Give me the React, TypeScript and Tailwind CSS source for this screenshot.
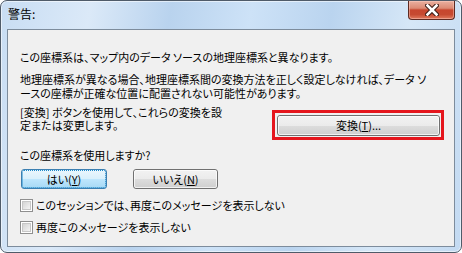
import React from 'react';

const jp = "font-['Noto_Sans_CJK_JP','Noto_Sans_CJK_SC',sans-serif] [font-feature-settings:'palt']";

const Key = ({ k }: { k: string }) => <span className="underline underline-offset-[1px]">{k}</span>;

const WinButton = ({ children, focused, className = '' }: { children: React.ReactNode; focused?: boolean; className?: string }) => (
  <div
    className={`flex items-center justify-center rounded-[3px] border text-[11px] leading-[13px] text-black ${
      focused
        ? 'border-[#3c7fb1] bg-[linear-gradient(#eaf6fd_0%,#d9f0fc_50%,#bee6fd_51%,#a7d9f5_100%)]'
        : 'border-[#707070] bg-[linear-gradient(#f2f2f2_0%,#ebebeb_50%,#dddddd_51%,#cfcfcf_100%)]'
    } ${className}`}
  >
    <div className={`flex h-full w-full items-center justify-center rounded-[2px] border ${focused ? 'border-dotted border-[#1f89c9]' : 'border-white/70'}`}>
      {children}
    </div>
  </div>
);

const CheckBox = ({ label }: { label: string }) => (
  <div className="flex items-center gap-[3px]">
    <div className="h-[13px] w-[13px] border border-[#8f8f8f] bg-white p-[1px]">
      <div className="h-full w-full border border-[#c7c7c7] bg-[linear-gradient(135deg,#d4d4d4,#f4f4f4)]" />
    </div>
    <span className="text-[11px] leading-[13px]">{label}</span>
  </div>
);

export default function App() {
  return (
    <div className={`${jp} h-[253px] w-[462px] bg-white text-black`}>
      <div className="flex h-full w-full flex-col rounded-[7px] border border-[#4f5b69] bg-[linear-gradient(100deg,#c8ddf3_0%,#dbe9f8_18%,#b9d3ee_34%,#cde2f7_50%,#bad4ef_66%,#d6e7f7_82%,#c3daf2_100%)] px-[6px] pb-[5px] shadow-[inset_0_0_0_1px_rgba(255,255,255,0.55)]">
        <div className="flex h-[28px] items-start justify-between">
          <span className="mt-[6px] pl-[1px] text-[12px] leading-[14px]">警告:</span>
          <div className="flex h-[19px] w-[47px] items-center justify-center rounded-b-[4px] border border-t-0 border-[#5d2a22] bg-[linear-gradient(#eab0a0_0%,#dc8a74_40%,#c7462e_50%,#c64a31_75%,#e07a5e_100%)] shadow-[inset_0_0_0_1px_rgba(255,210,200,0.45)]">
            <svg width="14" height="12" viewBox="0 0 14 12">
              <path d="M2.5 1.5 L11.5 10.5 M11.5 1.5 L2.5 10.5" stroke="#3a1a14" strokeWidth="4.6" strokeLinecap="square" />
              <path d="M2.5 1.5 L11.5 10.5 M11.5 1.5 L2.5 10.5" stroke="#ffffff" strokeWidth="2.6" strokeLinecap="square" />
            </svg>
          </div>
        </div>
        <div className="flex flex-1 flex-col border border-[#7d8c9c] bg-[#f0f0f0] pl-[12px] pr-[10px] text-[11px] leading-[13px]">
          <p className="mt-[21px] whitespace-nowrap">この座標系は、マップ内のデータ ソースの地理座標系と異なります。</p>
          <p className="mt-[8px] whitespace-nowrap leading-[14px]">
            地理座標系が異なる場合、地理座標系間の変換方法を正しく設定しなければ、データ ソ
            <br />
            ースの座標が正確な位置に配置されない可能性があります。
          </p>
          <div className="mt-[6px] flex items-start justify-between">
            <p className="whitespace-nowrap">
              [変換] ボタンを使用して、これらの変換を設
              <br />
              定または変更します。
            </p>
            <div className="mt-[4px] h-[30px] w-[172px] border-[3px] border-[#e5161d] pl-[2px] pr-[1px] pt-[2px] pb-[1px]">
              <WinButton className="h-full w-full">
                <span>変換(<Key k="T" />)...</span>
              </WinButton>
            </div>
          </div>
          <p className="mt-[9px] whitespace-nowrap">この座標系を使用しますか?</p>
          <div className="mt-[7px] flex gap-[26px] pl-[1px]">
            <WinButton focused className="h-[20px] w-[86px]">
              <span>はい(<Key k="Y" />)</span>
            </WinButton>
            <WinButton className="h-[20px] w-[85px]">
              <span>いいえ(<Key k="N" />)</span>
            </WinButton>
          </div>
          <div className="mt-[10px] flex flex-col gap-[9px]">
            <CheckBox label="このセッションでは、再度このメッセージを表示しない" />
            <CheckBox label="再度このメッセージを表示しない" />
          </div>
        </div>
      </div>
    </div>
  );
}
